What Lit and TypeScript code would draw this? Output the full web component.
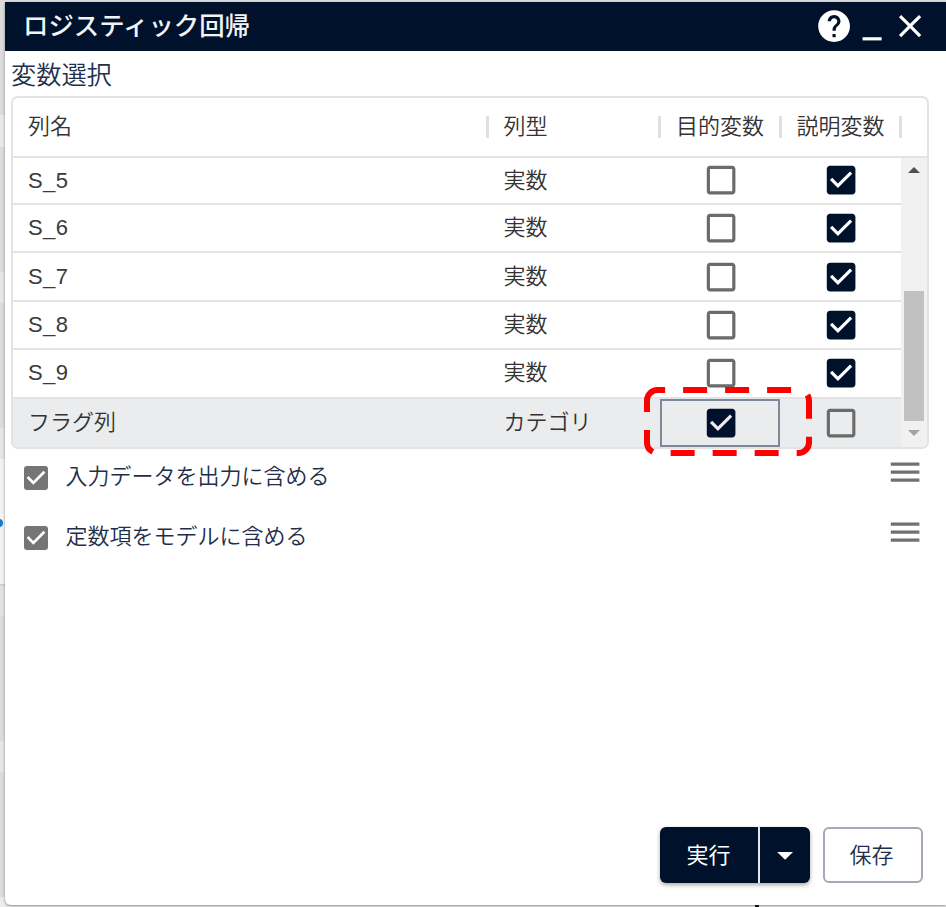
import { LitElement, html, css, svg } from "lit";
import { customElement, property } from "lit/decorators.js";

const ICONS: Record<string, string> = {
  help: "M12 2C6.48 2 2 6.48 2 12s4.48 10 10 10 10-4.48 10-10S17.52 2 12 2zm1 17h-2v-2h2v2zm2.07-7.75l-.9.92C13.45 12.9 13 13.5 13 15h-2v-.5c0-1.1.45-2.1 1.17-2.83l1.24-1.26c.37-.36.59-.86.59-1.41 0-1.1-.9-2-2-2s-2 .9-2 2H8c0-2.21 1.79-4 4-4s4 1.79 4 4c0 .88-.36 1.68-.93 2.25z",
  minimize: "M6 19h12v2H6z",
  close: "M19 6.41L17.59 5 12 10.59 6.41 5 5 6.41 10.59 12 5 17.59 6.41 19 12 13.41 17.59 19 19 17.59 13.41 12z",
  menu: "M3 18h18v-2H3v2zm0-5h18v-2H3v2zm0-7v2h18V6H3z",
  checked: "M19 3H5c-1.11 0-2 .9-2 2v14c0 1.1.89 2 2 2h14c1.11 0 2-.9 2-2V5c0-1.1-.89-2-2-2zm-9 14l-5-5 1.41-1.41L10 14.17l7.59-7.59L19 8l-9 9z",
  unchecked: "M19 5v14H5V5h14m0-2H5c-1.1 0-2 .9-2 2v14c0 1.1.9 2 2 2h14c1.1 0 2-.9 2-2V5c0-1.1-.9-2-2-2z",
  down: "M7 10l5 5 5-5z",
};

@customElement("ui-icon")
export class UiIcon extends LitElement {
  @property() name = "help";
  static styles = css`
    :host { display: block; width: 38.2px; height: 38.2px; flex: none; }
    svg { display: block; width: 100%; height: 100%; fill: currentColor; }
  `;
  render() {
    return html`<svg viewBox="0 0 24 24">${svg`<path d=${ICONS[this.name]}></path>`}</svg>`;
  }
}

interface Row { name: string; type: string; target: boolean; feature: boolean; }

@customElement("app-root")
export class AppRoot extends LitElement {
  rows: Row[] = [
    ...[5, 6, 7, 8, 9].map((n) => ({ name: `S_${n}`, type: "実数", target: false, feature: true })),
    { name: "フラグ列", type: "カテゴリ", target: true, feature: false },
  ];
  options = ["入力データを出力に含める", "定数項をモデルに含める"];

  static styles = css`
    :host {
      display: block; height: 907px; box-sizing: border-box; overflow: hidden;
      padding: 1.5px 0 0 5px;
      background: linear-gradient(#dcdcdc 0 115px, #e9e9e9 115px 147px, #dcdcdc 147px 272px, #e6e6e6 272px 303px, #dcdcdc 303px 428px, #e6e6e6 428px 459px, #f3f3f3 459px 584px, #cfcfcf 584px 586px, #e2e2e2 586px 616px, #dcdcdc 616px 741px, #e6e6e6 741px 772px, #dcdcdc 772px 897px, #ececec 897px);
      font: 350 22px "Liberation Sans", "Noto Sans CJK JP", sans-serif;
      color: #333;
    }
    * { box-sizing: border-box; }
    .dialog {
      height: 903.5px; background: #fff; display: flex; flex-direction: column;
      border-bottom-left-radius: 6px; box-shadow: 0 1px 3px rgba(0, 0, 0, 0.4);
    }
    .bar {
      height: 49.5px; flex: none; background: #00112b; color: #fff; display: flex; align-items: center;
      padding: 0.5px 16.5px 0 18px;
    }
    .title { flex: 1; font-size: 25.4px; font-weight: 500; color: #f2f3f5; line-height: 48px; height: 49px; }
    .heading { height: 45px; flex: none; padding-left: 6px; font-size: 25.2px; line-height: 49px; color: #1f2f4b; }
    .table {
      margin-left: 6px; width: 918px; height: 353px; flex: none; border: 2px solid #e3e3e3;
      border-radius: 7px; overflow: hidden; position: relative;
    }
    .grid { display: grid; grid-template-columns: 474.5px 172.5px 120.5px 120.5px; }
    .head { height: 59.5px; border-bottom: 2px solid #e3e3e3; align-items: center; }
    .head .cell { display: flex; align-items: center; height: 58px; line-height: 58px; }
    .head .cell span { flex: 1; height: 58px; }
    .head .cell::after { content: ""; width: 3px; height: 22px; background: #e0e0e0; margin-right: -1px; }
    .cell { padding-left: 15px; white-space: nowrap; }
    .head .cell + .cell, .row .cell + .cell { padding-left: 16px; }
    .body { display: flex; height: 289.5px; }
    .rows { flex: none; width: 888px; }
    .row { height: 48.4px; border-bottom: 2px solid #e3e3e3; align-items: center; }
    .row:first-child { height: 47.6px; }
    .row .cell { line-height: 46px; }
    .row:first-child .cell { line-height: 45px; }
    .latin { letter-spacing: 0.4px; color: #3a3a3a; }
    .row.selected { background: #ebecee; height: 50px; border-bottom: 0; }
    .row.selected .cell { padding-bottom: 2px; }
    .check { display: flex; align-items: center; justify-content: center; height: 100%; padding-left: 1px; color: #6b6b6b; }
    .selected .check { padding-bottom: 2px; }
    .check.on { color: #00112b; }
    .selected .focus { outline: 2px solid #7d8998; outline-offset: -2px; height: 48.5px; margin-bottom: 1.5px; padding: 0 0 0.5px 2px; width: 120px; }
    .scroll { flex: 1; background: #f1f1f1; display: flex; flex-direction: column; align-items: center; padding: 9.5px 0 11px; }
    .up, .dn { border: 6px solid transparent; border-top: 0; border-bottom: 6.5px solid #505050; }
    .dn { transform: rotate(180deg); border-bottom-color: #a3a3a3; margin-top: 9px; }
    .thumb { width: 20px; height: 130px; background: #c1c1c1; margin-top: auto; }
    .option { height: 59.5px; flex: none; display: flex; align-items: flex-start; padding: 0 21.5px 0 15px; color: #1f2f4b; }
    .option .box { width: 32px; height: 32px; margin-top: 13px; color: #757575; }
    .option .label { flex: 1; padding-left: 13.6px; line-height: 56.6px; }
    .option .grip { color: #717171; margin-top: 4px; }
    .footer { margin-top: auto; display: flex; padding: 0 23.5px 22px 0; justify-content: flex-end; font-weight: 400; }
    .split { display: flex; height: 56.5px; border-radius: 6px; background: #00112b; color: #fff; margin-right: 12.5px; box-shadow: 0 2px 4px rgba(0, 0, 0, 0.35); }
    .run { width: 100px; text-align: center; line-height: 57px; border-right: 2px solid #e4e6ea; }
    .more { width: 50.5px; display: flex; align-items: center; justify-content: center; }
    .save { width: 100px; height: 56.5px; border: 2px solid #a3a9b5; border-radius: 6px; color: #1f2f4b; text-align: center; line-height: 54px; padding-right: 2px; font-weight: 350; }
    .callout { position: absolute; left: 640px; top: 383px; width: 176px; height: 77px; fill: none; stroke: #f00; stroke-width: 6; stroke-dasharray: 24 18; }
    .dot { position: absolute; left: -5px; top: 519px; width: 8px; height: 8px; border-radius: 50%; background: #1b76c4; }
    .edge { position: absolute; left: 755px; top: 905px; width: 4px; height: 2px; background: #111; }
  `;

  check(on: boolean, focus = false) {
    return html`<div class="check ${on ? "on" : ""} ${focus ? "focus" : ""}">
      <ui-icon name=${on ? "checked" : "unchecked"}></ui-icon>
    </div>`;
  }

  render() {
    return html`
      <div class="dialog">
        <div class="bar">
          <div class="title">ロジスティック回帰</div>
          <ui-icon name="help"></ui-icon><ui-icon name="minimize"></ui-icon><ui-icon name="close"></ui-icon>
        </div>
        <div class="heading">変数選択</div>
        <div class="table">
          <div class="grid head">
            ${["列名", "列型", "目的変数", "説明変数"].map((t) => html`<div class="cell"><span>${t}</span></div>`)}
          </div>
          <div class="body">
            <div class="rows">
              ${this.rows.map((r) => html`<div class="grid row ${r.target ? "selected" : ""}">
                <div class="cell ${r.target ? "" : "latin"}">${r.name}</div>
                <div class="cell">${r.type}</div>
                ${this.check(r.target, r.target)}${this.check(r.feature)}
              </div>`)}
            </div>
            <div class="scroll"><div class="up"></div><div class="thumb"></div><div class="dn"></div></div>
          </div>
        </div>
        ${this.options.map((o) => html`<div class="option">
          <ui-icon class="box" name="checked"></ui-icon>
          <div class="label">${o}</div>
          <ui-icon class="grip" name="menu"></ui-icon>
        </div>`)}
        <div class="footer">
          <div class="split"><div class="run">実行</div><div class="more"><ui-icon name="down"></ui-icon></div></div>
          <div class="save">保存</div>
        </div>
      </div>
      <div class="dot"></div>
      <div class="edge"></div>
      <svg class="callout" viewBox="640 383 176 77">
        <path d="M647 400.5A10.5 10.5 0 0 1 657.5 390H798.5A10.5 10.5 0 0 1 809 400.5V442.5A10.5 10.5 0 0 1 798.5 453H657.5A10.5 10.5 0 0 1 647 442.5Z"></path>
      </svg>
    `;
  }
}
